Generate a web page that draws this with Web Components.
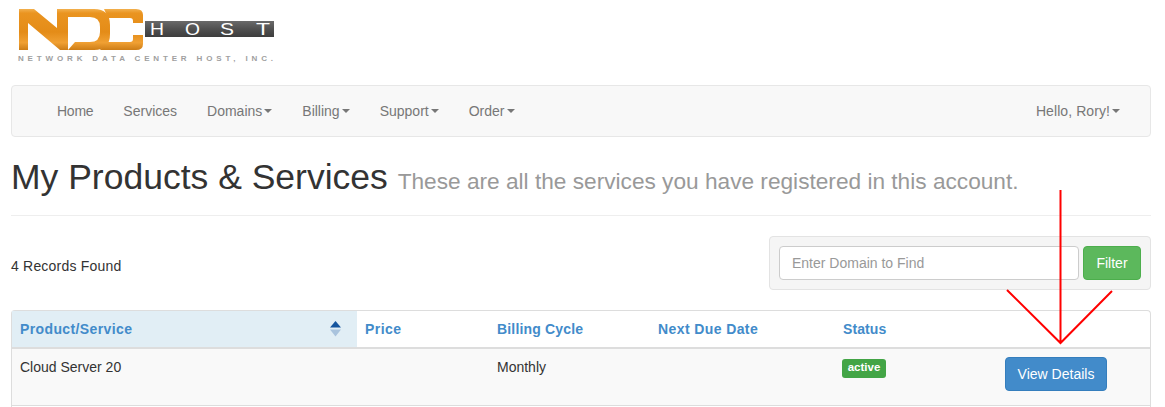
<!DOCTYPE html>
<html>
<head>
<meta charset="utf-8">
<title>My Products &amp; Services</title>
<style>
    html, body {
        margin: 0;
        padding: 0;
        height: 407px;
        overflow: hidden;
        background: #fff;
        font-family: "Liberation Sans", Arial, sans-serif;
        font-size: 14px;
        line-height: 20px;
        color: #333;
    }
</style>
</head>
<body>
<ndc-page>
    <ndc-logo></ndc-logo>
    <ndc-navbar>
        <ndc-nav-item style="letter-spacing: -0.25px">Home</ndc-nav-item>
        <ndc-nav-item>Services</ndc-nav-item>
        <ndc-nav-item caret>Domains</ndc-nav-item>
        <ndc-nav-item caret>Billing</ndc-nav-item>
        <ndc-nav-item caret>Support</ndc-nav-item>
        <ndc-nav-item caret>Order</ndc-nav-item>
        <ndc-nav-item slot="right" caret style="letter-spacing: 0.08px">Hello, Rory!</ndc-nav-item>
    </ndc-navbar>
    <ndc-page-header>
        My Products &amp; Services
        <span slot="sub">These are all the services you have registered in this account.</span>
    </ndc-page-header>
    <ndc-toolbar>
        4 Records Found
    </ndc-toolbar>
    <ndc-table>
        <ndc-th sorted style="letter-spacing: 0.38px">Product/Service</ndc-th>
        <ndc-th style="letter-spacing: 0.45px">Price</ndc-th>
        <ndc-th style="letter-spacing: 0.17px">Billing Cycle</ndc-th>
        <ndc-th style="letter-spacing: 0.4px">Next Due Date</ndc-th>
        <ndc-th style="letter-spacing: 0.1px">Status</ndc-th>
        <ndc-th></ndc-th>
        <ndc-td>Cloud Server 20</ndc-td>
        <ndc-td></ndc-td>
        <ndc-td>Monthly</ndc-td>
        <ndc-td></ndc-td>
        <ndc-td><ndc-label>active</ndc-label></ndc-td>
        <ndc-td><ndc-button>View Details</ndc-button></ndc-td>
    </ndc-table>
    <ndc-arrow></ndc-arrow>
</ndc-page>

<script>
// Outer page box, everything sits in the 1140px wide column.
class NdcPage extends HTMLElement {
    constructor() {
        super()
        this.attachShadow({ mode: 'open' }).innerHTML = `
<style>
    :host {
        display: block;
        position: relative;
        width: 1140px;
        margin-left: 11px;
    }
</style>
<slot></slot>`
    }
}

// The logo is artwork, only HOST and the tag line stay as text.
class NdcLogo extends HTMLElement {
    constructor() {
        super()
        this.attachShadow({ mode: 'open' }).innerHTML = `
<style>
    :host {
        display: block;
        height: 85px;
    }
    svg {
        display: block;
    }
    text {
        font-family: "Liberation Sans", Arial, sans-serif;
    }
</style>
<svg width="270" height="85" viewBox="11 0 270 85">
    <defs>
        <linearGradient id="orange" x1="0" y1="9" x2="0" y2="51" gradientUnits="userSpaceOnUse">
            <stop offset="0" stop-color="#f2b04e"/>
            <stop offset="0.1" stop-color="#ea9420"/>
            <stop offset="0.55" stop-color="#e48c18"/>
            <stop offset="0.8" stop-color="#f0a033"/>
            <stop offset="1" stop-color="#c87812"/>
        </linearGradient>
        <linearGradient id="bar" x1="0" y1="21" x2="0" y2="37" gradientUnits="userSpaceOnUse">
            <stop offset="0" stop-color="#6a6a6a"/>
            <stop offset="0.5" stop-color="#505050"/>
            <stop offset="1" stop-color="#3d3d3d"/>
        </linearGradient>
    </defs>
    <path fill="url(#orange)" d="M19 9 H34 L57 28 V9 H67 V50 H60 L28 23 V50 H19 Z"/>
    <path fill="url(#orange)" fill-rule="evenodd" d="M67 9 H94 Q110 9 110 25 V34 Q110 50 94 50 H67 Z M68 17 V50 L75 42 H90 Q100 42 100 32 V27 Q100 17 90 17 Z"/>
    <path fill="url(#orange)" d="M104 9 H136 Q143 9 143 15 V23 H133 V21 Q133 18 130 18 H108 Z M106 42 H130 Q133 42 133 39 V35 H143 V44 Q143 50 136 50 H100 Z"/>
    <rect x="145" y="21" width="129" height="16" fill="url(#bar)"/>
    <g fill="#fff" font-size="17">
        <text x="150" y="35" textLength="14" lengthAdjust="spacingAndGlyphs">H</text>
        <text x="185" y="35" textLength="15" lengthAdjust="spacingAndGlyphs">O</text>
        <text x="220" y="35" textLength="14" lengthAdjust="spacingAndGlyphs">S</text>
        <text x="256" y="35" textLength="14" lengthAdjust="spacingAndGlyphs">T</text>
    </g>
    <text x="18" y="61" font-size="8" font-weight="bold" fill="#a0a0a0" textLength="255" lengthAdjust="spacing">NETWORK DATA CENTER HOST, INC.</text>
</svg>`
    }
}

class NdcNavbar extends HTMLElement {
    constructor() {
        super()
        this.attachShadow({ mode: 'open' }).innerHTML = `
<style>
    :host {
        display: flex;
        justify-content: space-between;
        height: 50px;
        padding: 0 15px 0 30px;
        margin-bottom: 20px;
        background: #f8f8f8;
        border: 1px solid #e7e7e7;
        border-radius: 4px;
    }
    div {
        display: flex;
    }
</style>
<div><slot></slot></div>
<div><slot name="right"></slot></div>`
    }
}

class NdcNavItem extends HTMLElement {
    constructor() {
        super()
        this.attachShadow({ mode: 'open' }).innerHTML = `
<style>
    :host {
        display: flex;
        align-items: center;
        padding: 0 15px;
        color: #777;
    }
    i {
        display: none;
        width: 0;
        height: 0;
        margin-left: 2px;
        border-top: 4px solid #777;
        border-left: 4px solid transparent;
        border-right: 4px solid transparent;
    }
    :host([caret]) i {
        display: block;
    }
</style>
<slot></slot><i></i>`
    }
}

class NdcPageHeader extends HTMLElement {
    constructor() {
        super()
        this.attachShadow({ mode: 'open' }).innerHTML = `
<style>
    :host {
        display: block;
        height: 58px;
        margin-bottom: 20px;
        border-bottom: 1px solid #eee;
        font-size: 35.5px;
        line-height: 40px;
        color: #333;
        white-space: nowrap;
    }
    ::slotted(span) {
        font-size: 22.67px;
        color: #999;
    }
</style>
<slot></slot><slot name="sub"></slot>`
    }
}

class NdcFilterBox extends HTMLElement {
    constructor() {
        super()
        this.attachShadow({ mode: 'open' }).innerHTML = `
<style>
    :host {
        display: flex;
        gap: 4px;
        width: 362px;
        padding: 9px;
        background: #f5f5f5;
        border: 1px solid #e3e3e3;
        border-radius: 4px;
    }
    .input {
        box-sizing: border-box;
        width: 300px;
        height: 34px;
        padding: 6px 12px;
        background: #fff;
        border: 1px solid #ccc;
        border-radius: 4px;
        color: #999;
    }
    .filter {
        box-sizing: border-box;
        width: 58px;
        height: 34px;
        padding: 6px 0;
        text-align: center;
        background: #5cb85c;
        border: 1px solid #4cae4c;
        border-radius: 4px;
        color: #fff;
    }
</style>
<div class="input">Enter Domain to Find</div>
<div class="filter">Filter</div>`
    }
}

class NdcToolbar extends HTMLElement {
    constructor() {
        super()
        this.attachShadow({ mode: 'open' }).innerHTML = `
<style>
    :host {
        display: flex;
        justify-content: space-between;
        align-items: center;
        margin-bottom: 20px;
    }
    .count {
        padding-top: 6px;
        letter-spacing: 0.2px;
    }
</style>
<div class="count"><slot></slot></div>
<ndc-filter-box></ndc-filter-box>`
    }
}

class NdcTable extends HTMLElement {
    constructor() {
        super()
        this.attachShadow({ mode: 'open' }).innerHTML = `
<style>
    :host {
        display: grid;
        grid-template-columns: 345px 132px 161px 185px 140px 1fr;
        padding-bottom: 2px;
        border: 1px solid #ddd;
        border-bottom: 0;
        border-radius: 4px 4px 0 0;
    }
</style>
<slot></slot>`
    }
}

class NdcTh extends HTMLElement {
    constructor() {
        super()
        this.attachShadow({ mode: 'open' }).innerHTML = `
<style>
    :host {
        display: flex;
        justify-content: space-between;
        align-items: center;
        height: 36px;
        padding: 0 16px 0 8px;
        border-bottom: 2px solid #ddd;
        font-weight: bold;
        color: #428bca;
    }
    :host([sorted]) {
        background: #e1eef5;
    }
    svg {
        display: none;
    }
    :host([sorted]) svg {
        display: block;
    }
</style>
<div><slot></slot></div>
<svg width="11" height="16" viewBox="0 0 11 16">
    <path d="M5.5 0 L11 6.5 H0 Z" fill="#15559e"/>
    <path d="M0 8.5 H11 L5.5 15.5 Z" fill="#a9c3dd"/>
</svg>`
    }
}

class NdcTd extends HTMLElement {
    constructor() {
        super()
        this.attachShadow({ mode: 'open' }).innerHTML = `
<style>
    :host {
        display: block;
        height: 41px;
        padding: 8px 8px 7px;
        background: #f9f9f9;
        border-bottom: 1px solid #ddd;
    }
</style>
<slot></slot>`
    }
}

class NdcLabel extends HTMLElement {
    constructor() {
        super()
        this.attachShadow({ mode: 'open' }).innerHTML = `
<style>
    :host {
        display: block;
        width: 44px;
        height: 19px;
        margin: 2px 0 0 -1px;
        background: #43a546;
        border-radius: 3px;
        font-size: 11.5px;
        font-weight: bold;
        line-height: 17px;
        text-align: center;
        color: #fff;
    }
</style>
<slot></slot>`
    }
}

class NdcButton extends HTMLElement {
    constructor() {
        super()
        this.attachShadow({ mode: 'open' }).innerHTML = `
<style>
    :host {
        display: block;
        box-sizing: border-box;
        width: 102px;
        height: 34px;
        margin-left: 22px;
        padding: 6px 0;
        text-align: center;
        background: #428bca;
        border: 1px solid #357ebd;
        border-radius: 4px;
        color: #fff;
    }
</style>
<slot></slot>`
    }
}

// Red hand drawn arrow that lies over the page, pointing at the button.
class NdcArrow extends HTMLElement {
    constructor() {
        super()
        this.attachShadow({ mode: 'open' }).innerHTML = `
<style>
    :host {
        display: block;
        position: absolute;
        left: 985px;
        top: 185px;
        width: 130px;
        height: 165px;
        pointer-events: none;
    }
</style>
<svg width="130" height="165" viewBox="996 185 130 165">
    <path d="M1060.5 190 V343 M1007 290 L1060.5 343 L1112 291" fill="none" stroke="#f00" stroke-width="2"/>
</svg>`
    }
}

customElements.define('ndc-page', NdcPage)
customElements.define('ndc-logo', NdcLogo)
customElements.define('ndc-navbar', NdcNavbar)
customElements.define('ndc-nav-item', NdcNavItem)
customElements.define('ndc-page-header', NdcPageHeader)
customElements.define('ndc-filter-box', NdcFilterBox)
customElements.define('ndc-toolbar', NdcToolbar)
customElements.define('ndc-table', NdcTable)
customElements.define('ndc-th', NdcTh)
customElements.define('ndc-td', NdcTd)
customElements.define('ndc-label', NdcLabel)
customElements.define('ndc-button', NdcButton)
customElements.define('ndc-arrow', NdcArrow)
</script>
</body>
</html>
